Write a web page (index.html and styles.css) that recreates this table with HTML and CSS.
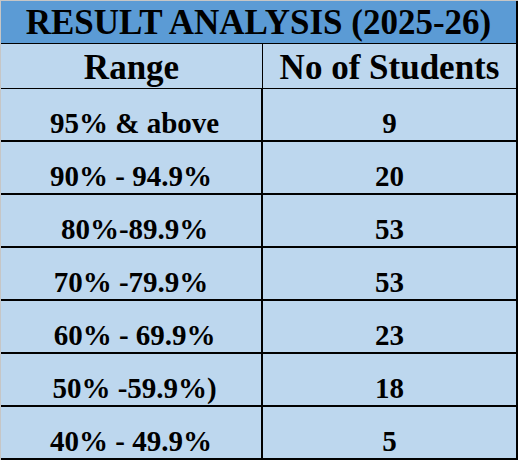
FILE: index.html
```html
<!DOCTYPE html>
<html>
<head>
    <meta name="viewport" content="width=device-width, initial-scale=1.0">
    <link rel="stylesheet" href="styles.css">
</head>
<body>
<div class="sheet">
    <div class="title">RESULT ANALYSIS (2025-26)</div>

    <div class="cell head range">Range</div>
    <div class="cell head count">No of Students</div>

    <div class="cell range"> 95% &amp; above</div>
    <div class="cell count">9</div>

    <div class="cell range">90% - 94.9%</div>
    <div class="cell count">20</div>

    <div class="cell range"> 80%-89.9%</div>
    <div class="cell count">53</div>

    <div class="cell range">70% -79.9%</div>
    <div class="cell count">53</div>

    <div class="cell range"> 60% - 69.9%</div>
    <div class="cell count">23</div>

    <div class="cell range"> 50% -59.9%)</div>
    <div class="cell count">18</div>

    <div class="cell range">40% - 49.9%</div>
    <div class="cell count">5</div>
</div>
</body>
</html>
```

FILE: styles.css
```css
body {
    margin: 0;
    background-color: #c6c6c6;
    font-family: "Liberation Serif", "Times New Roman", serif;
    font-weight: bold;
    color: #000;
}

.sheet {
    margin: 1px 0 0 1px;
    width: 517px;
    display: grid;
    grid-template-columns: 262px 255px;
    grid-template-rows: 43px 45px repeat(7, 53px);
    background-color: #bdd7ee;
}

.title {
    grid-column: 1 / 3;
    box-sizing: border-box;
    background-color: #5b9bd5;
    border-bottom: 1px solid #000;
    border-right: 2px solid #000;
    font-size: 35px;
    display: flex;
    justify-content: center;
    align-items: flex-end;
}

.cell {
    box-sizing: border-box;
    border-bottom: 2px solid #000;
    font-size: 29px;
    white-space: pre;
    display: flex;
    justify-content: center;
    align-items: flex-end;
}

.range {
    border-right: 2px solid #000;
}

.count {
    border-right: 2px solid #000;
}

.head {
    font-size: 35px;
    border-bottom-width: 1px;
}

.head.range {
    border-right-width: 1px;
}
```
